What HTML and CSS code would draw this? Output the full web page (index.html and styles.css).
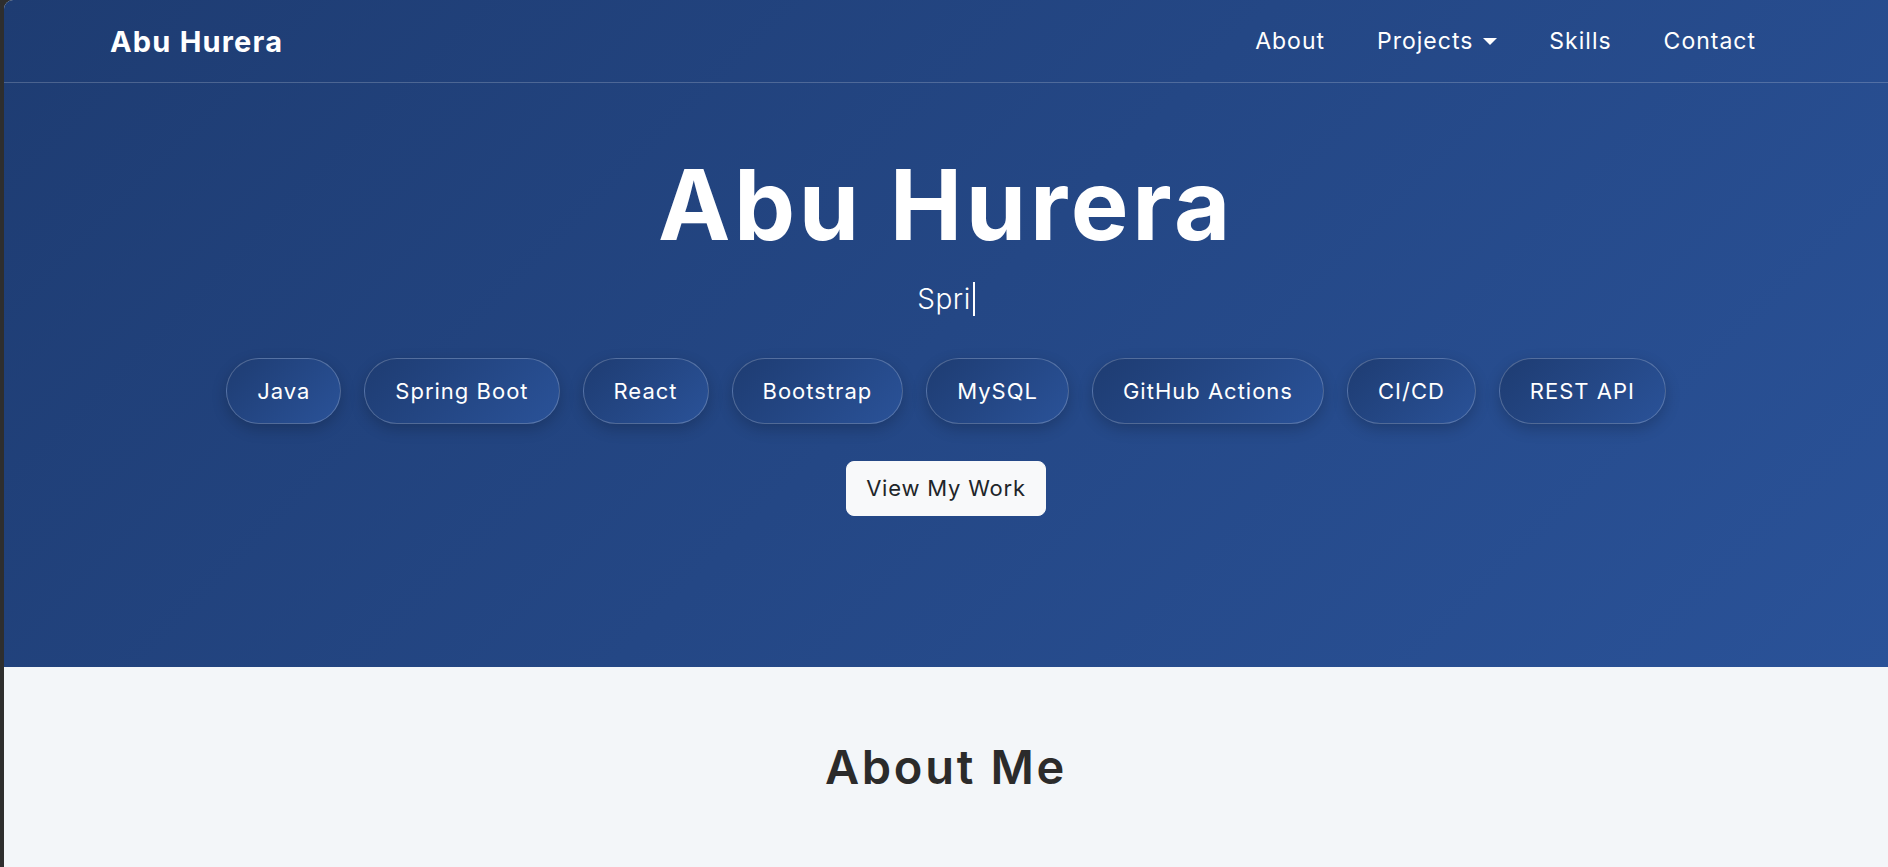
FILE: index.html
```html
<!DOCTYPE html>
<html lang="en">
<head>
<meta charset="utf-8">
<title>Abu Hurera</title>
<link rel="stylesheet" href="styles.css">
</head>
<body>
<div class="page">
  <header class="hero">
    <nav class="navbar">
      <a class="brand" href="#">Abu Hurera</a>
      <ul class="nav-links">
        <li><a href="#">About</a></li>
        <li><a href="#">Projects<span class="caret"></span></a></li>
        <li><a href="#">Skills</a></li>
        <li><a href="#">Contact</a></li>
      </ul>
    </nav>
    <div class="hero-body">
      <h1 class="hero-title">Abu Hurera</h1>
      <p class="typed"><span class="typed-text">Spri</span></p>
      <div class="pills">
        <span class="pill">Java</span>
        <span class="pill">Spring Boot</span>
        <span class="pill">React</span>
        <span class="pill">Bootstrap</span>
        <span class="pill">MySQL</span>
        <span class="pill">GitHub Actions</span>
        <span class="pill">CI/CD</span>
        <span class="pill">REST API</span>
      </div>
      <a class="btn-light" href="#">View My Work</a>
    </div>
  </header>
  <section class="about">
    <h2 class="section-title">About Me</h2>
  </section>
</div>
</body>
</html>
```
FILE: styles.css
```css
* { box-sizing: border-box; }
html, body { margin: 0; padding: 0; }
body {
  background: #2e2e2e;
  font-family: "Inter", "Open Sans", sans-serif;
  overflow: hidden;
}
.page {
  margin-left: 4px;
  border-top-left-radius: 9px;
  overflow: hidden;
  min-height: 867px;
  background: #f3f6f9;
}
.hero {
  background: linear-gradient(135deg, #1e3c72 0%, #2a5298 100%);
  color: #fff;
}
.navbar {
  height: 83px;
  display: flex;
  align-items: center;
  justify-content: space-between;
  padding: 0 106px;
  border-bottom: 1px solid rgba(255, 255, 255, 0.2);
}
.brand {
  color: #fff;
  text-decoration: none;
  font-weight: 700;
  font-size: 29px;
  letter-spacing: 1.2px;
}
.nav-links {
  list-style: none;
  display: flex;
  margin: 0;
  padding: 0;
}
.nav-links a {
  display: flex;
  align-items: center;
  color: #fff;
  text-decoration: none;
  font-size: 23px;
  letter-spacing: 1px;
  padding: 0 26px;
}
.caret {
  display: inline-block;
  margin-left: 10px;
  border-top: 7px solid #fff;
  border-left: 7px solid transparent;
  border-right: 7px solid transparent;
}
.hero-body {
  height: 584px;
  padding-top: 64px;
  text-align: center;
}
.hero-title {
  margin: 0 0 16px;
  font-size: 97px;
  line-height: 1.2;
  font-weight: 700;
  letter-spacing: 3.7px;
}
.typed {
  margin: 0 0 39px;
  font-size: 28px;
  font-weight: 300;
  line-height: 40px;
  letter-spacing: 0.5px;
}
.typed-text {
  border-right: 2px solid #fff;
  padding-right: 2px;
}
.pills {
  display: flex;
  justify-content: center;
  gap: 23px;
  margin-bottom: 37px;
}
.pill {
  display: inline-block;
  padding: 16px 30px;
  font-size: 22px;
  line-height: 32px;
  letter-spacing: 1px;
  border: 1px solid rgba(255, 255, 255, 0.22);
  border-radius: 50px;
  background: linear-gradient(135deg, #1e3c72 0%, #2a5298 100%);
  box-shadow: 0 5px 15px rgba(0, 0, 0, 0.2);
}
.btn-light {
  display: inline-block;
  padding: 10px 19px;
  font-size: 22px;
  line-height: 33px;
  letter-spacing: 0.8px;
  color: #212529;
  background: #f8f9fa;
  border: 1px solid #f8f9fa;
  border-radius: 8px;
  text-decoration: none;
}
.about {
  padding: 72px 0 80px;
  text-align: center;
}
.section-title {
  margin: 0;
  font-size: 47px;
  line-height: 1.2;
  font-weight: 600;
  letter-spacing: 2.7px;
  color: #2b2b2b;
}
```
